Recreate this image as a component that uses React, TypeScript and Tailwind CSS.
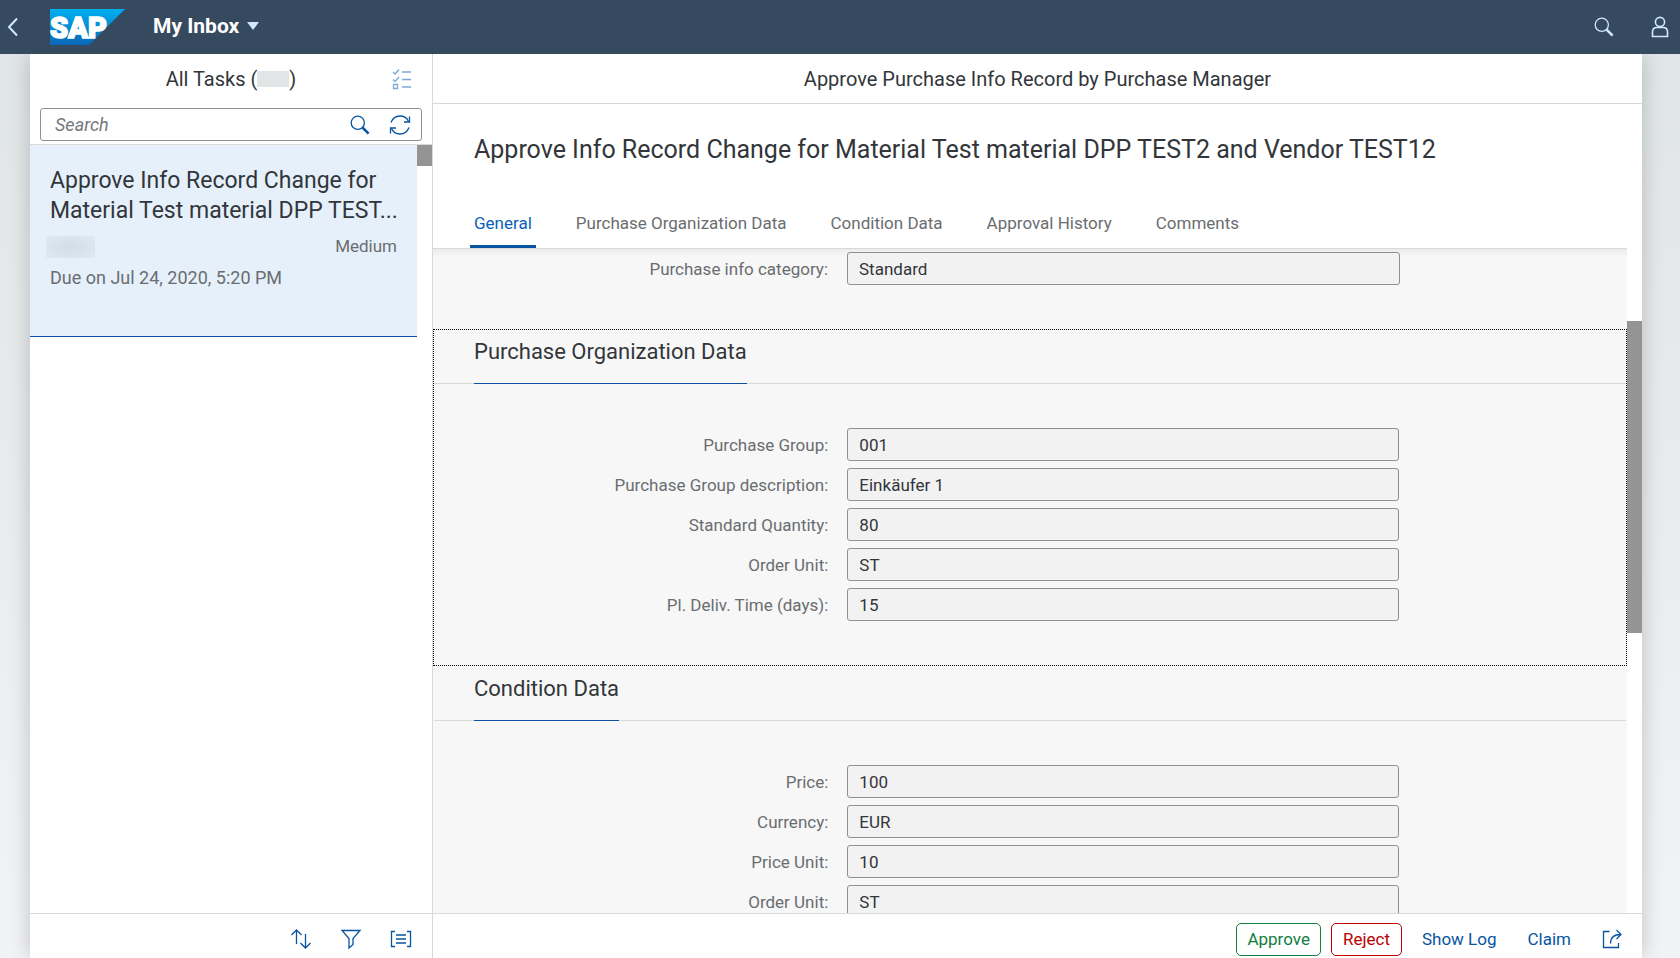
import type { ReactNode } from "react";
import clsx from "clsx";

const tabs = [
  "General",
  "Purchase Organization Data",
  "Condition Data",
  "Approval History",
  "Comments",
];

type FieldData = { id: string; label: string; value: string };

const generalFields: FieldData[] = [
  { id: "info-category", label: "Purchase info category:", value: "Standard" },
];

const purchaseFields: FieldData[] = [
  { id: "purchase-group", label: "Purchase Group:", value: "001" },
  { id: "purchase-group-desc", label: "Purchase Group description:", value: "Einkäufer 1" },
  { id: "standard-qty", label: "Standard Quantity:", value: "80" },
  { id: "order-unit", label: "Order Unit:", value: "ST" },
  { id: "delivery-time", label: "Pl. Deliv. Time (days):", value: "15" },
];

const conditionFields: FieldData[] = [
  { id: "price", label: "Price:", value: "100" },
  { id: "currency", label: "Currency:", value: "EUR" },
  { id: "price-unit", label: "Price Unit:", value: "10" },
  { id: "cond-order-unit", label: "Order Unit:", value: "ST" },
];

function Icon({ children, className }: { children: ReactNode; className?: string }) {
  return (
    <svg
      viewBox="0 0 22 22"
      width="22"
      height="22"
      fill="none"
      stroke="currentColor"
      strokeWidth="1.3"
      aria-hidden
      className={clsx("shrink-0", className)}
    >
      {children}
    </svg>
  );
}

function SearchIcon({ className }: { className?: string }) {
  return (
    <Icon className={className}>
      <circle cx="8.8" cy="8.8" r="6.6" />
      <path d="M13.6 13.6l6 6" strokeWidth="2.6" />
    </Icon>
  );
}

function SapLogo() {
  return (
    <svg viewBox="0 0 75 36" width="75" height="36" role="img" aria-label="SAP">
      <defs>
        <linearGradient id="sap" x1="0" y1="0" x2="0" y2="1">
          <stop offset="0" stopColor="#00b0ef" />
          <stop offset="1" stopColor="#0a67b9" />
        </linearGradient>
      </defs>
      <path d="M0 0h75L39 36H0z" fill="url(#sap)" />
      <text
        x="0"
        y="29"
        fill="#fff"
        stroke="#fff"
        strokeWidth="1.6"
        fontSize="29"
        fontWeight="900"
        fontFamily="Roboto, sans-serif"
      >
        SAP
      </text>
    </svg>
  );
}

function ShellBar() {
  return (
    <header className="z-10 flex h-[54px] shrink-0 items-center bg-[#354a5f] text-white">
      <button type="button" aria-label="Back" className="flex w-[50px] pl-[2px]">
        <Icon>
          <path d="M15 2.5L7 11l8 8.5" strokeWidth="2" stroke="#d1e8ff" />
        </Icon>
      </button>
      <a href="#home">
        <SapLogo />
      </a>
      <button
        type="button"
        className="ml-7 flex items-center gap-2 pb-[2px] text-[21px] leading-7 font-bold"
      >
        My Inbox
        <svg viewBox="0 0 12 8" width="12" height="8" aria-hidden>
          <path d="M0 0h12L6 8z" fill="#d1e8ff" />
        </svg>
      </button>
      <div className="ml-auto flex items-center gap-[34px] pr-[9px] text-[#d1e8ff]">
        <button type="button" aria-label="Search">
          <SearchIcon />
        </button>
        <button type="button" aria-label="User">
          <Icon>
            <circle cx="11" cy="6" r="4.6" strokeWidth="1.6" />
            <path d="M3.5 20.5v-4.5q0-4.500 4.500-4.500h6q4.500 0 4.500 4.500v4.500z" strokeWidth="1.6" />
          </Icon>
        </button>
      </div>
    </header>
  );
}

function TaskList() {
  return (
    <aside className="flex w-[403px] shrink-0 flex-col border-r border-[#d9d9d9] bg-white">
      <div className="flex h-[50px] items-center pl-[41px] pr-[19px]">
        <h2 className="flex flex-1 items-center justify-center whitespace-pre text-[20px] text-[#32363a]">
          All Tasks (<span className="h-4 w-8 bg-[#e3e4e6]" />)
        </h2>
        <button type="button" aria-label="Multi-select" className="text-[#7fa8d6]">
          <Icon>
            <path d="M2 4l2 2 4-4.500M2 11.500l2 2 4-4.500M2.500 16.500h4v4h-4zM11 4h9M11 11.500h9M11 19h9" />
          </Icon>
        </button>
      </div>
      <div className="border-b border-[#d9d9d9] px-[10px] pb-[3px] pt-1">
        <div className="flex h-[33px] items-center rounded-[3px] border border-[#89919a] px-[10px] text-[#0854a0]">
          <input
            type="search"
            aria-label="Search tasks"
            placeholder="Search"
            className="min-w-0 flex-1 pl-1 text-[18px] italic outline-none placeholder:text-[#74777a]"
          />
          <button type="button" aria-label="Search">
            <SearchIcon />
          </button>
          <button type="button" aria-label="Refresh" className="ml-[18px]">
            <Icon>
              <path d="M2 8.500C3.500 4.500 7 2 11 2c4 0 7 2 8.500 5.500M20 13.500C18.500 17.500 15 20 11 20c-4 0-7-2-8.500-5.500" />
              <path d="M20.500 2.500v5.500H15M1.500 19.500V14H7" />
            </Icon>
          </button>
        </div>
      </div>
      <div className="flex min-h-0 flex-1">
        <ul className="flex-1">
          <li className="flex min-h-[192px] flex-col border-b border-[#0854a0] bg-[#e5f0fa] pb-5 pl-5 pr-2 pt-[21px]">
            <h3 className="text-[23px] leading-[30px] text-[#32363a]">
              Approve Info Record Change for Material Test material DPP TEST...
            </h3>
            <div className="flex h-[42px] items-center justify-between pr-3 text-[17px] text-[#6a6d70]">
              <span className="-ml-1 h-[22px] w-[49px] bg-[radial-gradient(ellipse,#d3dde7,#dfe9f2)]" />
              <span>Medium</span>
            </div>
            <p className="text-[18px] leading-5 text-[#6a6d70]">Due on Jul 24, 2020, 5:20 PM</p>
          </li>
        </ul>
        <div className="w-[15px]">
          <div className="h-[21px] bg-[#949494]" />
        </div>
      </div>
      <footer className="flex h-[45px] items-center justify-end gap-7 border-t border-[#d9d9d9] pr-5 pt-[6px] text-[#0854a0]">
        <button type="button" aria-label="Sort">
          <Icon>
            <path d="M6.500 16V2M1.500 7l5-5 5 5M15.500 6v14M10.500 15l5 5 5-5" />
          </Icon>
        </button>
        <button type="button" aria-label="Filter">
          <Icon>
            <path d="M2 2.500h18l-7 8v6l-4 3.500v-9.500z" />
          </Icon>
        </button>
        <button type="button" aria-label="Group">
          <Icon>
            <path d="M5 3.500H1.500v15H5M17 3.500h3.500v15H17M6 7h10M6 11h10M6 15h10" />
          </Icon>
        </button>
      </footer>
    </aside>
  );
}

function Field({ id, label, value }: FieldData) {
  return (
    <div className="grid h-[33px] grid-cols-12 items-center px-6 text-[17px]">
      <label htmlFor={id} className="col-span-4 pr-[11px] pt-[2px] text-right text-[#6a6d70]">
        {label}
      </label>
      <div className="col-span-6 pl-2 pr-3">
        <input
          id={id}
          readOnly
          defaultValue={value}
          className="h-[33px] w-full rounded-[3px] border border-[#89919a] bg-[#f2f2f2] px-[11px] pt-px text-[#32363a]"
        />
      </div>
    </div>
  );
}

function Section({
  title,
  fields,
  focused,
}: {
  title: string;
  fields: FieldData[];
  focused?: boolean;
}) {
  return (
    <section
      className={clsx("border border-dotted pb-11", focused ? "border-black" : "border-transparent")}
    >
      <div className="flex h-[54px] border-b border-[#d9d9d9] pl-10">
        <h3 className="-mb-px border-b border-[#0854a0] pt-[7px] text-[22px] leading-[30px] text-[#32363a]">
          {title}
        </h3>
      </div>
      <div className="flex flex-col gap-[7px] pt-11">
        {fields.map((f) => (
          <Field key={f.id} {...f} />
        ))}
      </div>
    </section>
  );
}

function Detail() {
  return (
    <main className="flex min-w-0 flex-1 flex-col bg-white">
      <h1 className="flex h-[50px] shrink-0 items-center justify-center border-b border-[#d9d9d9] pt-px text-[20px] text-[#32363a]">
        Approve Purchase Info Record by Purchase Manager
      </h1>
      <div className="flex min-h-0 flex-1">
        <div className="flex min-w-0 flex-1 flex-col">
          <div className="h-[145px] shrink-0 border-b border-[#d9d9d9]">
            <h2 className="truncate pl-[41px] pt-[30px] text-[25px] leading-8 text-[#32363a]">
              Approve Info Record Change for Material Test material DPP TEST2 and Vendor TEST12
            </h2>
            <nav className="flex gap-9 pl-[37px] pt-[30px] text-[17px]">
              {tabs.map((tab, i) => (
                <a
                  key={tab}
                  href={`#${tab.toLowerCase().replaceAll(" ", "-")}`}
                  className={clsx(
                    "flex h-[52px] items-center border-b-[3px] px-1 pt-[6px]",
                    i === 0
                      ? "border-[#0854a0] text-[#0a5fb8]"
                      : "border-transparent text-[#6a6d70]",
                  )}
                >
                  {tab}
                </a>
              ))}
            </nav>
          </div>
          <div className="min-h-0 flex-1 overflow-hidden bg-[#f7f7f7] bg-[linear-gradient(#ececec,#f7f7f7_8px)]">
            <div className="pb-11 pt-[3px]">
              {generalFields.map((f) => (
                <Field key={f.id} {...f} />
              ))}
            </div>
            <Section title="Purchase Organization Data" fields={purchaseFields} focused />
            <Section title="Condition Data" fields={conditionFields} />
          </div>
        </div>
        <div className="w-[15px] shrink-0 pt-[217px]">
          <div className="h-[312px] bg-[#949494]" />
        </div>
      </div>
      <footer className="flex h-[45px] shrink-0 items-center justify-end border-t border-[#d9d9d9] pr-[19px] pt-[6px] text-[17px] text-[#0854a0]">
        <button
          type="button"
          className="mr-[10px] h-[33px] rounded-[5px] border border-[#107e3e] px-[10px] pt-px text-[#107e3e]"
        >
          Approve
        </button>
        <button
          type="button"
          className="mr-5 h-[33px] rounded-[5px] border border-[#bb0000] px-[11px] pt-px text-[#bb0000]"
        >
          Reject
        </button>
        <button type="button" className="mr-[31px] pt-[2px]">
          Show Log
        </button>
        <button type="button" className="mr-[30px] pt-[2px]">
          Claim
        </button>
        <button type="button" aria-label="Share">
          <Icon>
            <path d="M8.500 3.500H2.500v16h15V15M9.500 15.500c0-6 3.500-9 10.500-9M15.500 2l4.500 4.500-4.500 4.500" />
          </Icon>
        </button>
      </footer>
    </main>
  );
}

export default function App() {
  return (
    <div className="flex h-screen flex-col overflow-hidden bg-gradient-to-b from-[#dfe4e4] to-[#f2f3f5] font-['Roboto',sans-serif]">
      <ShellBar />
      <div className="ml-[30px] mr-[38px] flex min-h-0 flex-1 shadow-[0_0_20px_rgba(0,0,0,0.2)]">
        <TaskList />
        <Detail />
      </div>
    </div>
  );
}
